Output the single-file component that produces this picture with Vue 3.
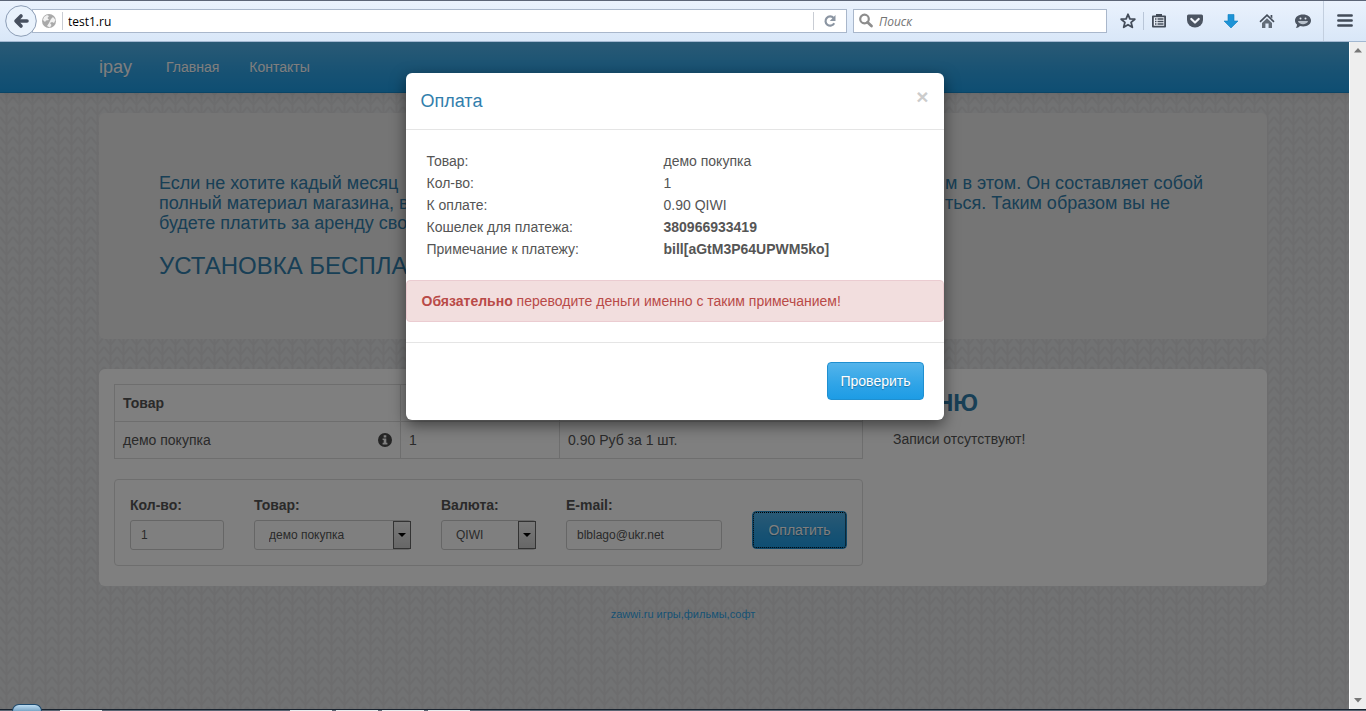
<script setup>
import { ref } from 'vue'

const address = ref('test1.ru')
const search = ref('')
const qty = ref('1')
const email = ref('blblago@ukr.net')

const details = [
  { label: 'Товар:', value: 'демо покупка' },
  { label: 'Кол-во:', value: '1' },
  { label: 'К оплате:', value: '0.90 QIWI' },
  { label: 'Кошелек для платежа:', value: '380966933419', strong: true },
  { label: 'Примечание к платежу:', value: 'bill[aGtM3P64UPWM5ko]', strong: true },
]
</script>

<template>
  <div class="screen">
    <header class="browser">
      <button class="back" aria-label="Назад">
        <svg width="32" height="32" viewBox="0 0 32 32">
          <circle cx="16" cy="16" r="15.3" fill="#e9f2fc" stroke="#8c9db5" />
          <path d="M16 11 L11 16 L16 21 M11.500 16 H22" fill="none" stroke="#47505f" stroke-width="3.6" stroke-linecap="round" stroke-linejoin="round" />
        </svg>
      </button>
      <div class="address">
        <svg class="globe" width="16" height="16" viewBox="0 0 16 16">
          <circle cx="8" cy="8" r="7" fill="#a9a9a9" />
          <path d="M3 4 L6 2 L8 3 L6.500 5 L8 7 L5 7.500 L4 9 L2 7 Z M10 6 L12 4 L14.500 7 L13 10 L11 9 L9 10 L10.500 12 L9 14.500 L6 13 L8 10 Z" fill="#f1f1f1" />
        </svg>
        <span class="bar"></span>
        <input v-model="address" class="field" aria-label="Адрес" />
        <span class="bar"></span>
        <button class="reload" aria-label="Обновить">
          <svg width="14" height="14" viewBox="0 0 14 14">
            <path d="M10.600 4 A4.600 4.600 0 1 0 11.200 9.200" fill="none" stroke="#8b95a2" stroke-width="2.200" />
            <path d="M12.500 1 V7 H6.800 Z" fill="#8b95a2" />
          </svg>
        </button>
      </div>
      <div class="search">
        <svg width="16" height="16" viewBox="0 0 16 16">
          <circle cx="6.500" cy="6" r="4.300" fill="none" stroke="#8d8d8d" stroke-width="2.200" />
          <path d="M9.500 9.200 L13.500 13" stroke="#8d8d8d" stroke-width="2.800" stroke-linecap="round" />
        </svg>
        <input v-model="search" class="field" placeholder="Поиск" aria-label="Поиск" />
      </div>
      <button class="tool star" aria-label="Закладка">
        <svg width="16" height="16" viewBox="0 0 16 16">
          <path d="M8 1.300 L9.900 5.800 L14.800 6.200 L11.100 9.400 L12.300 14.300 L8 11.700 L3.700 14.300 L4.900 9.400 L1.200 6.200 L6.100 5.800 Z" fill="none" stroke="#434c59" stroke-width="1.800" stroke-linejoin="round" />
        </svg>
      </button>
      <span class="bar tall"></span>
      <nav class="tools">
        <button class="tool" aria-label="Список закладок">
          <svg width="16" height="16" viewBox="0 0 16 16">
            <path d="M5 3.500 V1 H11 V3.500 Z" fill="#434c59" />
            <path d="M1.900 3.400 H14.100 V13.600 H1.900 Z" fill="#eef4fc" stroke="#434c59" stroke-width="1.800" stroke-linejoin="round" />
            <path d="M4 6 H5.500 M6.500 6 H12.500 M4 8.500 H5.500 M6.500 8.500 H12.500 M4 11 H5.500 M6.500 11 H12.500" stroke="#434c59" stroke-width="1.400" />
          </svg>
        </button>
        <button class="tool" aria-label="Pocket">
          <svg width="16" height="16" viewBox="0 0 16 16">
            <path d="M1.500 1.500 H14.500 Q16 1.500 16 3 V7 A8 7.500 0 0 1 0 7 V3 Q0 1.500 1.500 1.500 Z" fill="#4c5562" />
            <path d="M4.300 6 L8 9.500 L11.700 6" fill="none" stroke="#f2f6fc" stroke-width="2.200" stroke-linecap="round" stroke-linejoin="round" />
          </svg>
        </button>
        <button class="tool" aria-label="Загрузки">
          <svg width="16" height="16" viewBox="0 0 16 16">
            <path d="M5 1.500 H11 V8 H15 L8 15 L1 8 H5 Z" fill="#1d93d6" stroke="#0f7fc0" stroke-width=".600" />
          </svg>
        </button>
        <button class="tool" aria-label="Домой">
          <svg width="16" height="16" viewBox="0 0 16 16">
            <path d="M1 8.800 L8 2.200 L15 8.800" fill="none" stroke="#434c59" stroke-width="1.600" />
            <path d="M11.600 2 H13.300 V5.600 L11.600 4 Z" fill="#434c59" />
            <path d="M8 5.300 L13 10 V15 H9.600 V10.500 H6.400 V15 H3 V10 Z" fill="#626c78" />
          </svg>
        </button>
        <button class="tool" aria-label="Чат">
          <svg width="16" height="16" viewBox="0 0 16 16">
            <path d="M8 1.500 C12.600 1.500 16 4 16 7.600 C16 11.200 12.600 13.500 8.300 13.500 C7 13.500 6 13.300 5 13 C4 14.200 2.500 15 .800 15 C1.600 14 2 13 2 11.600 C.700 10.500 0 9.200 0 7.600 C0 4 3.400 1.500 8 1.500 Z" fill="#4c5562" />
            <circle cx="5.500" cy="5.500" r="1" fill="#dfe7f1" />
            <circle cx="10.500" cy="5.500" r="1" fill="#dfe7f1" />
            <path d="M3 8 H13 C12.300 12.200 3.700 12.200 3 8 Z" fill="#b9c2cd" />
          </svg>
        </button>
      </nav>
      <span class="bar full"></span>
      <button class="tool menu" aria-label="Меню браузера">
        <svg width="16" height="16" viewBox="0 0 16 16">
          <path d="M1.300 2.500 H14.700 M1.300 7.500 H14.700 M1.300 12.500 H14.700" stroke="#434c59" stroke-width="2.400" stroke-linecap="round" />
        </svg>
      </button>
    </header>

    <div class="view">
      <svg class="knit" width="100%" height="100%" aria-hidden="true">
        <defs>
          <pattern id="knit" width="13" height="10" patternUnits="userSpaceOnUse">
            <rect width="13" height="10" fill="#e3e4e6" />
            <path d="M0 -5 L6.500 3 L13 -5 M0 5 L6.500 13 L13 5 M6.500 0 V10" fill="none" stroke="#dadbdd" stroke-width="2" />
          </pattern>
        </defs>
        <rect width="100%" height="100%" fill="url(#knit)" />
      </svg>

      <div class="site">
        <nav class="navbar">
          <div class="container nav-row">
            <a href="#" class="brand">ipay</a>
            <a href="#" class="link">Главная</a>
            <a href="#" class="link">Контакты</a>
          </div>
        </nav>
        <main class="container">
          <section class="jumbo">
            <h4>
              <span>Если не хотите кадый месяц</span><span>м в этом. Он составляет собой</span>
              <span>полный материал магазина, в</span><span>ться. Таким образом вы не</span>
              <span>будете платить за аренду сво</span>
            </h4>
            <h3>УСТАНОВКА БЕСПЛА</h3>
          </section>

          <section class="panel">
            <div>
              <table class="goods">
                <thead>
                  <tr><th class="c1">Товар</th><th class="c2"></th><th></th></tr>
                </thead>
                <tbody>
                  <tr>
                    <td>
                      <div class="item">
                        демо покупка
                        <svg width="14" height="14" viewBox="0 0 14 14">
                          <circle cx="7" cy="7" r="7" fill="#4a4a4a" />
                          <path d="M5.700 2.300 H8.300 V4.400 H5.700 Z M4.600 5.500 H8.300 V9.800 H9.400 V11.500 H4.600 V9.800 H5.700 V7 H4.600 Z" fill="#fff" />
                        </svg>
                      </div>
                    </td>
                    <td>1</td>
                    <td>0.90 Руб за 1 шт.</td>
                  </tr>
                </tbody>
              </table>
              <form class="order" @submit.prevent>
                <div class="group">
                  <label for="qty">Кол-во:</label>
                  <input id="qty" v-model="qty" class="control" />
                </div>
                <div class="group">
                  <label for="product">Товар:</label>
                  <div class="pick">
                    <select id="product" class="control"><option>демо покупка</option></select>
                    <span class="arrow"></span>
                  </div>
                </div>
                <div class="group">
                  <label for="currency">Валюта:</label>
                  <div class="pick">
                    <select id="currency" class="control"><option>QIWI</option></select>
                    <span class="arrow"></span>
                  </div>
                </div>
                <div class="group">
                  <label for="email">E-mail:</label>
                  <input id="email" v-model="email" class="control" />
                </div>
                <button class="btn pay">Оплатить</button>
              </form>
            </div>
            <aside>
              <h3>МЕНЮ</h3>
              <p>Записи отсутствуют!</p>
            </aside>
          </section>
          <footer class="credit"><a href="#">zawwi.ru игры,фильмы,софт</a></footer>
        </main>
      </div>

      <div class="backdrop">
        <div class="stage">
          <div class="modal" role="dialog" aria-labelledby="pay-title">
            <div class="modal-head">
              <h4 id="pay-title">Оплата</h4>
              <button class="close" aria-label="Закрыть">×</button>
            </div>
            <div class="modal-body">
              <table class="details">
                <tbody>
                  <tr v-for="row in details" :key="row.label">
                    <td class="name">{{ row.label }}</td>
                    <td :class="{ strong: row.strong }">{{ row.value }}</td>
                  </tr>
                </tbody>
              </table>
            </div>
            <div class="alert"><b>Обязательно</b> переводите деньги именно с таким примечанием!</div>
            <div class="modal-foot"><button class="btn">Проверить</button></div>
          </div>
        </div>
        <div class="scrollbar">
          <svg width="8" height="5" viewBox="0 0 8 5"><path d="M4 0 L8 4.500 H0 Z" fill="#777" /></svg>
          <svg width="8" height="5" viewBox="0 0 8 5"><path d="M4 4.500 L8 0 H0 Z" fill="#777" /></svg>
        </div>
      </div>
    </div>

    <div class="taskbar">
      <span class="orb"></span>
      <span class="task first"></span>
      <span class="task second"></span>
      <span class="task"></span>
      <span class="task"></span>
      <span class="task"></span>
    </div>
  </div>
</template>

<style>
html,
body {
  margin: 0;
  overflow: hidden;
}
</style>

<style scoped>
.screen {
  display: flex;
  flex-direction: column;
  height: 100vh;
  overflow: hidden;
  font-family: "Liberation Sans", Arial, sans-serif;
  font-size: 14px;
  line-height: 20px;
  color: #555;
}
.screen * {
  box-sizing: border-box;
}
button,
input,
select {
  font-family: inherit;
  margin: 0;
}
h3,
h4,
p {
  margin: 0;
  font-weight: 400;
}
a {
  text-decoration: none;
}

/* browser toolbar */
.browser {
  display: flex;
  align-items: center;
  flex: none;
  height: 42px;
  padding: 0 13px 0 5px;
  border-top: 1px solid #5c6577;
  border-bottom: 1px solid #a3b8d1;
  background: linear-gradient(#eaf2fd, #d9e7f8);
}
.browser button {
  padding: 0;
  border: 0;
  background: none;
}
.browser svg {
  display: block;
}
.back {
  z-index: 1;
}
.address {
  display: flex;
  align-items: center;
  flex: 1;
  height: 24px;
  margin: 0 6px 0 -5px;
  padding-left: 8px;
  border: 1px solid #a9b7cb;
  background: #fff;
}
.bar {
  width: 1px;
  height: 18px;
  background: #c9cdd4;
}
.globe {
  margin-right: 5px;
}
.field {
  flex: 1;
  min-width: 0;
  padding: 0 5px;
  border: 0;
  outline: 0;
  background: none;
  font-family: "Open Sans", "Noto Sans", sans-serif;
  font-size: 12px;
  color: #000;
}
.field::placeholder {
  color: #737373;
  font-style: italic;
}
.reload {
  display: flex;
  justify-content: center;
  width: 32px;
}
.search {
  display: flex;
  align-items: center;
  width: 254px;
  height: 24px;
  padding-left: 4px;
  border: 1px solid #a9b7cb;
  background: #fff;
}
.star {
  margin: 0 7px 0 13px;
}
.bar.tall {
  background: #b9c6d8;
}
.bar.full {
  height: 40px;
  background: #c3cfdf;
}
.tools {
  display: flex;
  gap: 20px;
  margin: 0 12px 0 7px;
}
.menu {
  margin-left: 13px;
}

/* page */
.view {
  position: relative;
  flex: 1;
  min-height: 0;
  overflow: hidden;
}
.knit {
  position: absolute;
  inset: 0;
}
.site {
  position: relative;
}
.container {
  max-width: 1168px;
  margin: 0 auto;
}
.navbar {
  border-bottom: 1px solid #178acc;
  background: linear-gradient(#54b4eb, #2fa4e7 60%, #1d9ce5);
  box-shadow: 0 1px 10px rgba(0, 0, 0, 0.1);
}
.nav-row {
  display: flex;
  align-items: center;
  gap: 30px;
  height: 50px;
}
.navbar a {
  color: #fff;
  text-shadow: 0 1px 0 rgba(0, 0, 0, 0.1);
}
.brand {
  margin-right: 4px;
  font-size: 18px;
}
.jumbo {
  margin: 20px 0 30px;
  padding: 60px;
  border-radius: 6px;
  background: #ebebeb;
  color: #317eac;
}
.jumbo h4 {
  display: grid;
  grid-template-columns: 786fr 262fr;
  margin-bottom: 20px;
  font-size: 18px;
  line-height: 20px;
  white-space: nowrap;
}
.jumbo h3 {
  font-size: 24px;
  line-height: 26px;
}
.panel {
  display: grid;
  grid-template-columns: 749fr 359fr;
  gap: 30px;
  padding: 15px 15px 20px;
  border-radius: 6px;
  background: #fff;
}
.goods {
  width: 100%;
  border-collapse: collapse;
  table-layout: fixed;
}
.goods th,
.goods td {
  height: 37px;
  padding: 8px;
  border: 1px solid #ddd;
  text-align: left;
}
.c1 {
  width: 286px;
}
.c2 {
  width: 159px;
}
.item {
  display: flex;
  align-items: center;
  justify-content: space-between;
}
.order {
  display: grid;
  grid-template-columns: 94fr 157fr 95fr 156fr 95fr;
  gap: 30px;
  margin-top: 20px;
  padding: 15px;
  border: 1px solid #ddd;
  border-radius: 4px;
}
.group label {
  display: block;
  margin-bottom: 5px;
  font-weight: 700;
}
.control {
  display: block;
  width: 100%;
  height: 30px;
  padding: 4px 10px;
  border: 1px solid #ccc;
  border-radius: 3px;
  outline: 0;
  background: #fff;
  color: #555;
  font-size: 12px;
  appearance: none;
}
select.control {
  padding-left: 14px;
}
.pick {
  position: relative;
}
.arrow {
  position: absolute;
  top: 1px;
  right: 0;
  bottom: 1px;
  display: grid;
  place-items: center;
  width: 18px;
  border: 1px solid #666;
  background: linear-gradient(#f2f2f2, #cfcfcf);
  pointer-events: none;
}
.arrow::after {
  content: "";
  border: 4px solid transparent;
  border-top-color: #000;
  border-bottom: 0;
}
.btn {
  height: 38px;
  padding: 0 12px;
  border: 1px solid #1f8fd0;
  border-radius: 4px;
  background: linear-gradient(#54b4eb, #2fa4e7 60%, #1d9ce5);
  color: #fff;
  font-size: 14px;
  text-shadow: 0 1px 1px rgba(0, 0, 0, 0.3);
}
.pay {
  align-self: end;
  margin-bottom: 1px;
  outline: 1px dotted #000;
  outline-offset: -2px;
}
aside h3 {
  margin: 6px 0;
  padding-left: 7px;
  color: #317eac;
  font-size: 24px;
  font-weight: 700;
  line-height: 26px;
}
aside p {
  padding-top: 7px;
}
.credit {
  padding-top: 18px;
  text-align: center;
  font-size: 11px;
}
.credit a {
  color: #2fa4e7;
}

/* dialog */
.backdrop {
  position: absolute;
  inset: 0;
  display: flex;
  background: rgba(0, 0, 0, 0.5);
}
.stage {
  flex: 1;
  padding-top: 31px;
}
.modal {
  max-width: 538px;
  margin: 0 auto;
  border-radius: 6px;
  background: #fff;
  box-shadow: 0 5px 15px rgba(0, 0, 0, 0.5);
}
.modal-head {
  display: flex;
  align-items: center;
  justify-content: space-between;
  height: 57px;
  padding: 0 15px;
  border-bottom: 1px solid #e5e5e5;
}
.modal-head h4 {
  color: #317eac;
  font-size: 18px;
}
.close {
  padding: 0;
  margin-bottom: 8px;
  border: 0;
  background: none;
  color: #ccc;
  font-size: 21px;
  font-weight: 700;
  line-height: 20px;
}
.modal-body {
  padding: 20px;
}
.details {
  width: 100%;
  border-spacing: 0;
  table-layout: fixed;
}
.details td {
  padding: 1px;
}
.details .name {
  width: 237px;
}
.strong {
  font-weight: 700;
}
.alert {
  padding: 10px 15px;
  border: 1px solid #ebccd1;
  border-radius: 4px;
  background: #f2dede;
  color: #b94a48;
}
.modal-foot {
  margin-top: 20px;
  padding: 19px 20px 20px;
  border-top: 1px solid #e5e5e5;
}
.modal-foot .btn {
  display: block;
  margin-left: auto;
}
.scrollbar {
  display: flex;
  flex-direction: column;
  align-items: center;
  justify-content: space-between;
  width: 17px;
  padding: 6px 0;
  border-left: 1px solid #fff;
  background: #eee;
}

/* taskbar edge */
.taskbar {
  position: relative;
  display: flex;
  flex: none;
  gap: 4px;
  height: 2px;
  border-top: 1px solid #18222e;
  background: #5b6673;
}
.orb {
  position: absolute;
  bottom: 0;
  left: 12px;
  width: 30px;
  height: 7px;
  border: 1px solid #1f4a6d;
  border-bottom: 0;
  border-radius: 15px 15px 0 0;
  background: linear-gradient(#bcdcf2, #7ba6c6);
}
.task {
  width: 42px;
  background: #e8ecee;
}
.first {
  margin-left: 60px;
}
.second {
  margin-left: 184px;
}
</style>
